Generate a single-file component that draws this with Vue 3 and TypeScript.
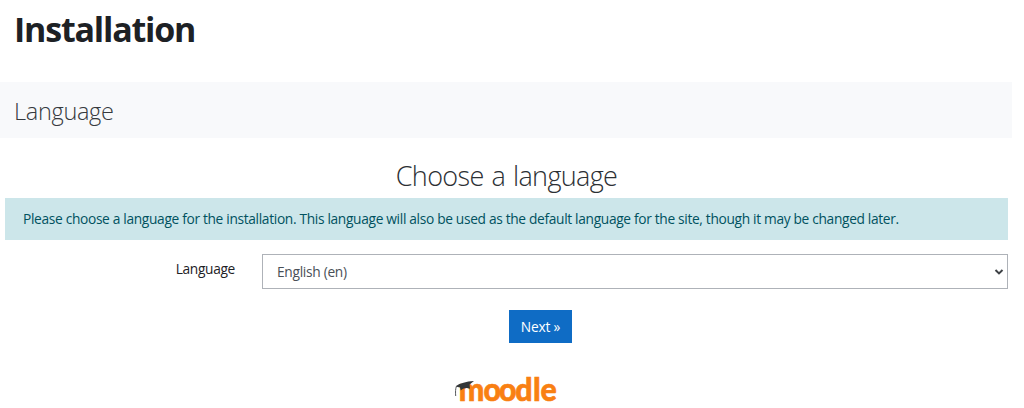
<script setup lang="ts">
import { ref } from 'vue'

const languages = [{ code: 'en', label: 'English (en)' }]
const selected = ref('en')
</script>

<template>
  <main class="page">
    <h1 class="title"><span>Installation</span></h1>
    <header class="stage"><h2>Language</h2></header>
    <form class="content" @submit.prevent>
      <h3>Choose a language</h3>
      <div class="notice"><p>Please choose a language for the installation. This language will also be used as the default language for the site, though it may be changed later.</p></div>
      <div class="field">
        <label for="language">Language</label>
        <div class="picker">
          <select id="language" v-model="selected">
            <option v-for="l in languages" :key="l.code" :value="l.code">{{ l.label }}</option>
          </select>
          <svg class="chevron" width="10" height="8" viewBox="0 0 10 8"><path d="M1.5 2 5 5.4 8.5 2" /></svg>
        </div>
      </div>
      <button type="submit">Next »</button>
    </form>
    <svg class="logo" width="104" height="30" viewBox="0 0 104 30" role="img" aria-label="moodle">
      <g transform="scale(.92 1)">
        <text y="26" x="5.2 32 49 66.5 86 94">moodle</text>
      </g>
      <path class="cap" d="M2 11C6 8.2 12 6.5 20 6L15.6 9.4 16 13.8C12.2 12 8.8 13.2 6.8 15.6L6 12.4 2.5 11.8Z" />
      <path class="tassel" d="M2.5 11C1.4 14 1.4 17 1.7 21" />
    </svg>
  </main>
</template>

<style>
body { background: #fff; }
</style>

<style scoped>
* { box-sizing: border-box; margin: 0; }
.page {
  height: 408px;
  background: #fff;
  color: #1d2125;
  font: 13.75px/20px "Open Sans", "Noto Sans", sans-serif;
  letter-spacing: -0.33px;
}
.title {
  height: 82px;
  padding: 5px 0 0 14px;
  font-size: 34px;
  line-height: 48px;
  font-weight: 700;
  letter-spacing: -1.2px;
}
.stage {
  width: 1012px;
  height: 56px;
  padding: 11px 0 0 14px;
  background: #f8f9fb;
}
.stage h2 { color: #363a3e; font-size: 23.5px; line-height: 36px; font-weight: 300; letter-spacing: -0.3px; }
.content { width: 1003px; margin-left: 5px; padding-top: 18px; }
h3 {
  height: 42px;
  color: #2c3034;
  font-size: 27px;
  line-height: 40px;
  font-weight: 300;
  letter-spacing: -0.65px;
  word-spacing: 1.5px;
  text-align: center;
}
.notice {
  height: 42px;
  padding: 11px 18px;
  background: #cce6ea;
  color: #00525f;
}
.notice p { white-space: nowrap; }
.field { display: flex; margin-top: 14px; }
label { width: 257px; padding: 5px 27px 0 0; text-align: right; }
.picker { position: relative; flex: 1; }
select {
  display: block;
  width: 100%;
  height: 35px;
  padding: 0 14px;
  border: 1.5px solid #aeb2b8;
  border-radius: 0;
  appearance: none;
  background: #fff;
  color: #495057;
  font: inherit;
  letter-spacing: -0.3px;
}
.chevron { position: absolute; right: 4px; top: 14px; fill: none; stroke: #3e4246; stroke-width: 2; }
button {
  display: block;
  width: 63px;
  height: 33px;
  margin: 21px 0 0 504px;
  padding: 0;
  border: 0;
  background: #0f6cc5;
  color: #fff;
  font: inherit;
  letter-spacing: -0.2px;
}
.logo { display: block; margin: 32px 0 0 454px; overflow: visible; }
.logo text { font: 900 33px/1 Lato, sans-serif; fill: #f98012; stroke: #f98012; stroke-width: .6; letter-spacing: 0; }
.cap { fill: #333638; }
.tassel { fill: none; stroke: #55585b; stroke-width: 1; }
</style>
